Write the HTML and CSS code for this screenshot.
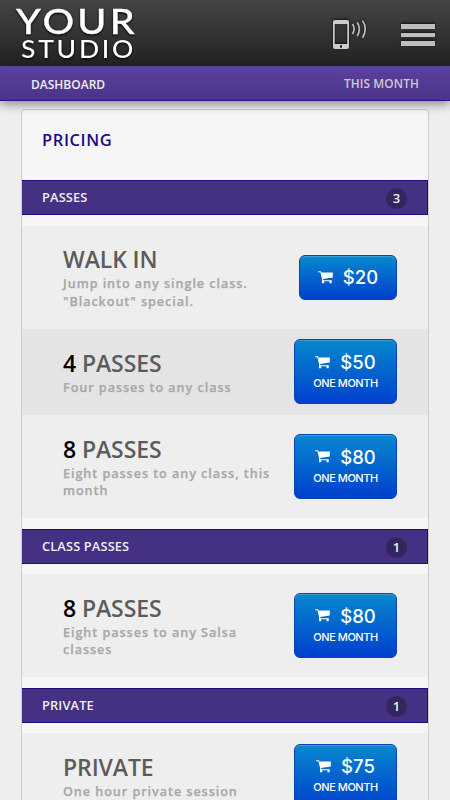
FILE: index.html
```html
<!DOCTYPE html>
<html lang="en">
<head>
<meta charset="utf-8">
<title>Your Studio – Pricing</title>
<link rel="stylesheet" href="styles.css">
</head>
<body>
<svg class="defs" width="0" height="0" aria-hidden="true">
  <symbol id="cart" viewBox="0 0 15 13">
    <path d="M.2 .3H2.9L3.5 1.4H14.8V6.6L5.1 8.1L5.3 9.3H13.7V10.2H4L4.2 8.6L2.4 1.3H.2Z"/>
    <path d="M4 9.8H6.2V12.2H4ZM11.5 9.8H13.7V12.2H11.5Z"/>
  </symbol>
</svg>
<header class="top">
  <svg class="logo" width="124" height="62" viewBox="0 0 124 62">
    <text class="logo-main" x="3.5" y="33.5" transform="scale(1.13 1)" textLength="105" lengthAdjust="spacing">YOUR</text>
    <text class="logo-sub" x="8.5" y="58.5" transform="scale(1.06 1)" textLength="106" lengthAdjust="spacing">STUDIO</text>
  </svg>
  <div class="tools">
    <svg width="36" height="32" viewBox="0 0 36 32">
      <path fill="#ccc" fill-rule="evenodd" d="M3 1H15Q17 1 17 3V28Q17 30 15 30H3Q1 30 1 28V3Q1 1 3 1ZM2.7 5V25H15.3V5ZM8 26.3V28.7H10V26.3Z"/>
      <g fill="none" stroke="#bbb" stroke-width="1.7"><path d="M20.5 5Q23.7 10 20.5 15"/><path d="M25.2 3.3Q29.5 10 25.2 17"/><path d="M30.5 1.4Q36 10 30.5 18.8"/></g>
    </svg>
    <div class="menu"><i></i><i></i><i></i></div>
  </div>
</header>
<nav class="bar"><span>DASHBOARD</span><span class="period">THIS MONTH</span></nav>
<main class="card">
  <h1>PRICING</h1>
  <section>
    <h2>PASSES <b class="count">3</b></h2>
    <div class="row">
      <div class="info"><h3>WALK IN</h3><p>Jump into any single class. "Blackout" special.</p></div>
      <button class="buy single"><span class="price"><svg><use href="#cart"/></svg>$20</span></button>
    </div>
    <div class="row alt">
      <div class="info"><h3><em>4</em> PASSES</h3><p>Four passes to any class</p></div>
      <button class="buy"><span class="price"><svg><use href="#cart"/></svg>$50</span><small>ONE MONTH</small></button>
    </div>
    <div class="row">
      <div class="info"><h3><em>8</em> PASSES</h3><p>Eight passes to any class, this month</p></div>
      <button class="buy"><span class="price"><svg><use href="#cart"/></svg>$80</span><small>ONE MONTH</small></button>
    </div>
  </section>
  <section>
    <h2>CLASS PASSES <b class="count">1</b></h2>
    <div class="row">
      <div class="info"><h3><em>8</em> PASSES</h3><p>Eight passes to any Salsa classes</p></div>
      <button class="buy"><span class="price"><svg><use href="#cart"/></svg>$80</span><small>ONE MONTH</small></button>
    </div>
  </section>
  <section>
    <h2>PRIVATE <b class="count">1</b></h2>
    <div class="row">
      <div class="info"><h3>PRIVATE</h3><p>One hour private session</p></div>
      <button class="buy"><span class="price"><svg><use href="#cart"/></svg>$75</span><small>ONE MONTH</small></button>
    </div>
  </section>
</main>
</body>
</html>
```
FILE: styles.css
```css
* { box-sizing: border-box; }
html, body { height: 100%; }
body {
  margin: 0;
  overflow: hidden;
  background: #eee;
  font-family: "Open Sans", sans-serif;
}
h1, h2, h3, p { margin: 0; }
.defs { display: block; }

.top {
  display: flex;
  justify-content: space-between;
  height: 66px;
  padding-left: 12px;
  background: linear-gradient(#444, #222);
}
.logo { overflow: visible; fill: #fff; font-family: Lato, sans-serif; filter: drop-shadow(0 1px 1px #000); }
.logo-main { font-size: 35px; font-weight: 500; stroke: #fff; stroke-width: .3px; }
.logo-sub { font-size: 25px; font-weight: 500; }
.tools {
  display: flex;
  gap: 33px;
  padding: 19px 15px 0 0;
  filter: drop-shadow(0 -1px 1px #111);
}
.menu { display: flex; flex-direction: column; gap: 4px; padding-top: 5px; }
.menu i { width: 34px; height: 4.5px; background: #bebebe; }

.bar {
  position: relative;
  display: flex;
  justify-content: space-between;
  height: 35px;
  padding: 0 31px;
  border-bottom: 1px solid #35127f;
  background: linear-gradient(#5c419f, #4a3389);
  box-shadow: 0 4px 9px rgba(0, 0, 0, .38);
  color: #eee;
  font-size: 12px;
  font-weight: 600;
  line-height: 37px;
}
.period { line-height: 35px; color: #ccc; font-size: 11.8px; letter-spacing: .15px; }

.card {
  width: 408px;
  height: 691px;
  overflow: hidden;
  margin: 8px 0 0 21px;
  border: 1px solid #ccc;
  border-bottom: 0;
  border-radius: 4px 4px 0 0;
  background: #f6f6f6;
}
h1 {
  height: 70px;
  padding-left: 20px;
  color: #1a0a85;
  font-size: 16.5px;
  font-weight: 600;
  line-height: 60px;
  letter-spacing: .6px;
}
h2 {
  display: flex;
  align-items: center;
  justify-content: space-between;
  height: 35px;
  margin-bottom: 10.5px;
  padding: 0 20px 1px;
  border: 1px solid #210b7d;
  border-width: 1px 1px 1px 0;
  background: #443184;
  color: #eee;
  font-size: 12.8px;
  font-weight: 600;
  letter-spacing: .15px;
}
section { margin-bottom: 10.4px; }
.count {
  width: 21px;
  height: 21px;
  margin: 3px 0 0;
  border-radius: 50%;
  background: #33265f;
  color: #eee;
  font-size: 13px;
  font-weight: 600;
  line-height: 20px;
  letter-spacing: 0;
  text-align: center;
}

.row {
  display: flex;
  align-items: center;
  justify-content: space-between;
  padding: 0 31px 0 41px;
  background: #eee;
}
.alt { background: #e4e4e4; }
.info { width: 215px; padding: 21.9px 0 18.5px; }
h3 {
  margin-bottom: 4px;
  color: #5c5c5c;
  font-size: 23px;
  font-weight: 600;
  line-height: 24px;
  letter-spacing: -.1px;
}
h3 em { color: #000; font-style: normal; }
p {
  color: #a8a8a8;
  font-size: 12.6px;
  font-weight: 600;
  -webkit-text-stroke: .25px #a8a8a8;
  line-height: 17.5px;
  letter-spacing: .95px;
}

.buy {
  display: flex;
  flex-direction: column;
  align-items: center;
  width: 103px;
  height: 65px;
  padding: 9.7px 0 0;
  border: 1px solid #0845ad;
  border-radius: 6px;
  background: linear-gradient(#0788cd, #0040cd);
  box-shadow: inset 0 1px 0 rgba(255, 255, 255, .2);
  color: #fff;
  font-family: Inter, sans-serif;
  font-weight: 500;
}
.single { width: 98px; height: 45px; }
.price {
  display: flex;
  align-items: center;
  gap: 10px;
  height: 24px;
  font-size: 18.5px;
}
.price svg { width: 15px; height: 13px; fill: #fff; }
.buy small { margin-top: 1.9px; font-size: 11px; line-height: 15px; letter-spacing: -.45px; }
```
